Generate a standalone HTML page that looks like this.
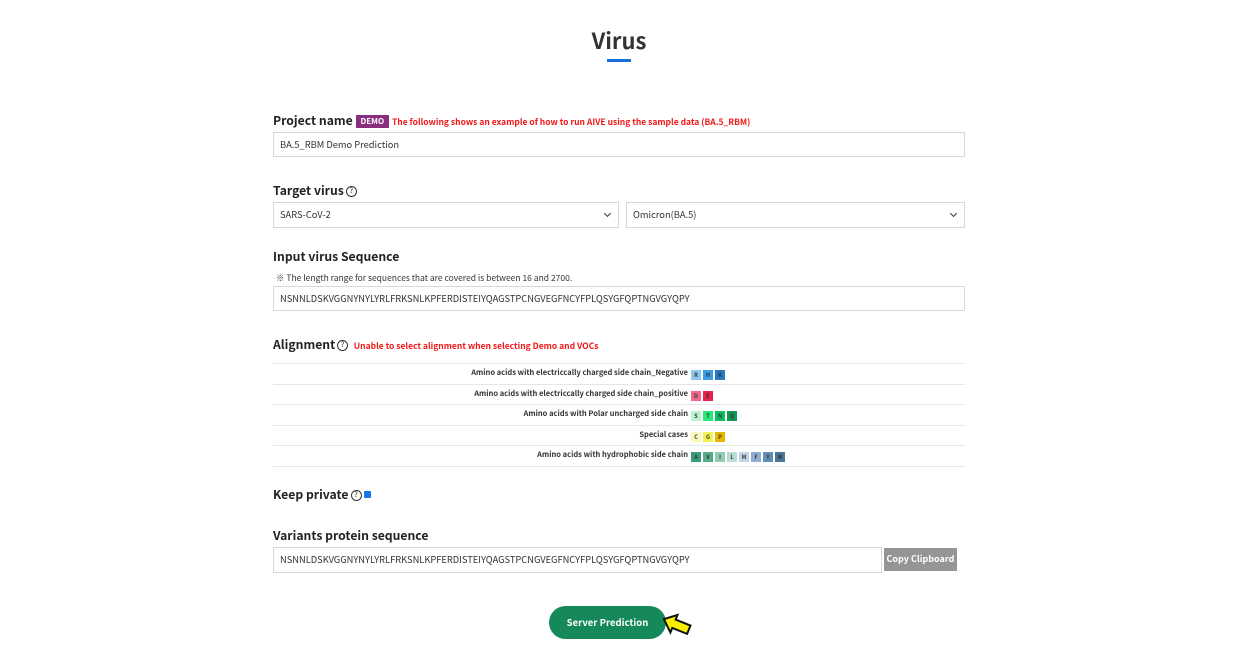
<!DOCTYPE html><html><head><style>
body{margin:0;width:1240px;height:670px;background:#fff;font-family:"Noto Sans CJK KR","Liberation Sans",sans-serif;position:relative;overflow:hidden;color:#222}
.a{position:absolute;line-height:1.2}
h1{position:absolute;top:27px;left:0;width:1238px;text-align:center;margin:0;font-size:22px;font-weight:bold;color:#333;line-height:1.2}
.bar{left:607px;top:59px;width:24px;height:3px;background:#1a6fd6}
.lbl{font-size:12.2px;font-weight:bold;color:#222;left:273px}
.inp{border:1px solid #d8d8d8;box-sizing:border-box;font-size:9.3px;color:#333;padding-left:6px;display:flex;align-items:center;background:#fff}
.q{display:inline-block;width:9px;height:9px;border:1px solid #333;border-radius:50%;font-size:7px;text-align:center;line-height:9px;vertical-align:2px;margin-left:2px;font-weight:normal}
.red{color:#f01818;font-size:8.5px;font-weight:bold}
.row{left:273px;width:692px;height:20px;border-top:1px solid #e6e6e6;font-size:7.5px;font-weight:bold;color:#333}
.row .t{position:absolute;right:277px;top:4px;white-space:nowrap}
.row .bx{position:absolute;left:418px;top:6px;white-space:nowrap;display:flex}
.b{display:inline-block;width:10px;height:10px;margin-right:2px;font-size:5.5px;text-align:center;line-height:10px;color:#333}
.chev{position:absolute;right:8px;top:8px;width:4px;height:4px;border-right:1.3px solid #333;border-bottom:1.3px solid #333;transform:rotate(45deg)}
</style></head><body>
<h1>Virus</h1><div class="a bar"></div>
<div class="a lbl" style="top:113px">Project name <span style="background:#8a2e80;color:#fff;font-size:8px;padding:1px 5px;vertical-align:1px;margin-left:0">DEMO</span> <span class="red">The following shows an example of how to run AIVE using the sample data (BA.5_RBM)</span></div>
<div class="a inp" style="left:273px;top:132px;width:692px;height:25px">BA.5_RBM Demo Prediction</div>
<div class="a lbl" style="top:183px">Target virus<span class="q">?</span></div>
<div class="a inp" style="left:273px;top:202px;width:346px;height:26px">SARS-CoV-2<span class="chev"></span></div>
<div class="a inp" style="left:626px;top:202px;width:339px;height:26px">Omicron(BA.5)<span class="chev"></span></div>
<div class="a lbl" style="top:249px">Input virus Sequence</div>
<div class="a" style="left:276px;top:273px;font-size:8.5px;color:#333">※ The length range for sequences that are covered is between 16 and 2700.</div>
<div class="a inp" style="left:273px;top:286px;width:692px;height:25px">NSNNLDSKVGGNYNYLYRLFRKSNLKPFERDISTEIYQAGSTPCNGVEGFNCYFPLQSYGFQPTNGVGYQPY</div>
<div class="a lbl" style="top:337px">Alignment<span class="q">?</span> &nbsp;<span class="red">Unable to select alignment when selecting Demo and VOCs</span></div>
<div class="a row" style="top:363px"><span class="t">Amino acids with electriccally charged side chain_Negative</span><span class="bx"><span class="b" style="background:#8ec8f0">R</span><span class="b" style="background:#3a9de8">H</span><span class="b" style="background:#2a78c0">K</span></span></div>
<div class="a row" style="top:384px"><span class="t">Amino acids with electriccally charged side chain_positive</span><span class="bx"><span class="b" style="background:#f06a88">D</span><span class="b" style="background:#e8204a">E</span></span></div>
<div class="a row" style="top:404px"><span class="t">Amino acids with Polar uncharged side chain</span><span class="bx"><span class="b" style="background:#b8f4cc">S</span><span class="b" style="background:#28e878">T</span><span class="b" style="background:#10c060">N</span><span class="b" style="background:#10985a">Q</span></span></div>
<div class="a row" style="top:425px"><span class="t">Special cases</span><span class="bx"><span class="b" style="background:#f8f8b8">C</span><span class="b" style="background:#f0f050">G</span><span class="b" style="background:#e8b800">P</span></span></div>
<div class="a row" style="top:445px;border-bottom:1px solid #e6e6e6"><span class="t">Amino acids with hydrophobic side chain</span><span class="bx"><span class="b" style="background:#3a9a7a">A</span><span class="b" style="background:#5aaa8a">V</span><span class="b" style="background:#90cdb4">I</span><span class="b" style="background:#b8dcd4">L</span><span class="b" style="background:#c4d4e4">M</span><span class="b" style="background:#90b0d0">F</span><span class="b" style="background:#6090b8">Y</span><span class="b" style="background:#4a7898">W</span></span></div>
<div class="a lbl" style="top:487px">Keep private<span class="q">?</span> <span style="display:inline-block;width:7px;height:7px;background:#1a73e8;border-radius:1px;vertical-align:1px"></span></div>
<div class="a lbl" style="top:528px">Variants protein sequence</div>
<div class="a inp" style="left:273px;top:547px;width:609px;height:26px">NSNNLDSKVGGNYNYLYRLFRKSNLKPFERDISTEIYQAGSTPCNGVEGFNCYFPLQSYGFQPTNGVGYQPY</div>
<div class="a" style="left:884px;top:548px;width:73px;height:23px;background:#959595;color:#fff;font-size:9px;font-weight:bold;display:flex;align-items:center;justify-content:center">Copy Clipboard</div>
<div class="a" style="left:549px;top:606px;width:117px;height:33px;background:#15895a;border-radius:17px;color:#fff;font-size:9.5px;font-weight:bold;display:flex;align-items:center;justify-content:center">Server Prediction</div>
<svg class="a" style="left:660px;top:612px" width="34" height="26" viewBox="0 0 34 26"><path d="M3 12 L14 3 L14 8 L30 8 L30 17 L14 17 L14 22 Z" transform="rotate(22 16 12)" fill="#f8f000" stroke="#111" stroke-width="2" stroke-linejoin="miter"/></svg>
</body></html>
